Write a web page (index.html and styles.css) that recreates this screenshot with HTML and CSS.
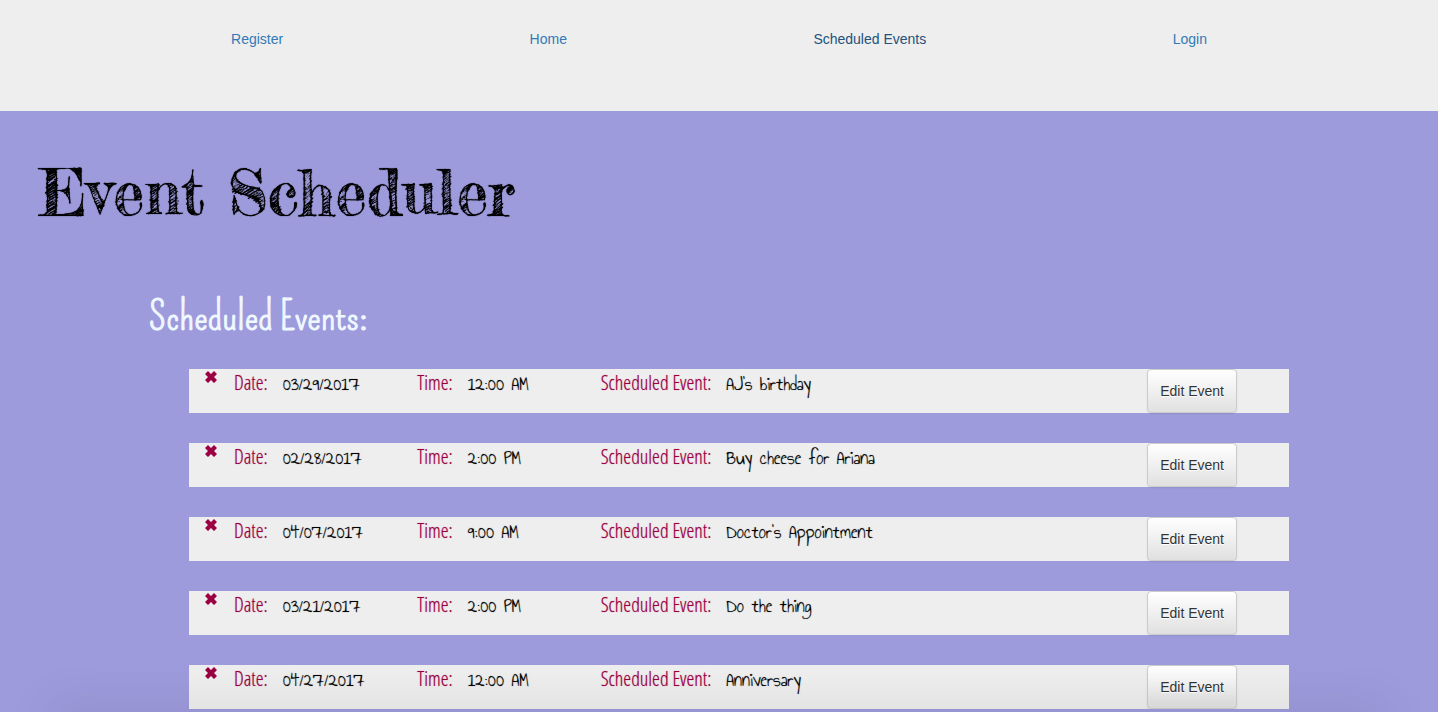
FILE: index.html
```
<!DOCTYPE html>
<html lang="en">
<head>
<meta charset="utf-8">
<title>Event Scheduler</title>
<link rel="stylesheet" href="styles.css">
</head>
<body>
<svg class="sprite" aria-hidden="true"><symbol id="remove" viewBox="0 0 12 12"><path d="M3 0 6 3 9 0 12 3 9 6 12 9 9 12 6 9 3 12 0 9 3 6 0 3Z" stroke-linejoin="round"/></symbol></svg>
<nav class="nav">
  <a href="#">Register</a>
  <a href="#">Home</a>
  <a href="#" class="active">Scheduled Events</a>
  <a href="#">Login</a>
</nav>
<main>
  <h1 class="title">Event Scheduler</h1>
  <section class="container">
    <h2 class="heading">Scheduled Events:</h2>
    <ul class="events">
      <li class="event">
        <button class="remove" aria-label="Remove event"><svg><use href="#remove"/></svg></button>
        <p class="field"><span class="label">Date:</span><span class="value">03/29/2017</span></p>
        <p class="field"><span class="label">Time:</span><span class="value">12:00 AM</span></p>
        <p class="field"><span class="label">Scheduled Event:</span><span class="value">AJ's birthday</span></p>
        <button class="edit">Edit Event</button>
      </li>
      <li class="event">
        <button class="remove" aria-label="Remove event"><svg><use href="#remove"/></svg></button>
        <p class="field"><span class="label">Date:</span><span class="value">02/28/2017</span></p>
        <p class="field"><span class="label">Time:</span><span class="value">2:00 PM</span></p>
        <p class="field"><span class="label">Scheduled Event:</span><span class="value">Buy cheese for Ariana</span></p>
        <button class="edit">Edit Event</button>
      </li>
      <li class="event">
        <button class="remove" aria-label="Remove event"><svg><use href="#remove"/></svg></button>
        <p class="field"><span class="label">Date:</span><span class="value">04/07/2017</span></p>
        <p class="field"><span class="label">Time:</span><span class="value">9:00 AM</span></p>
        <p class="field"><span class="label">Scheduled Event:</span><span class="value">Doctor's Appointment</span></p>
        <button class="edit">Edit Event</button>
      </li>
      <li class="event">
        <button class="remove" aria-label="Remove event"><svg><use href="#remove"/></svg></button>
        <p class="field"><span class="label">Date:</span><span class="value">03/21/2017</span></p>
        <p class="field"><span class="label">Time:</span><span class="value">2:00 PM</span></p>
        <p class="field"><span class="label">Scheduled Event:</span><span class="value">Do the thing</span></p>
        <button class="edit">Edit Event</button>
      </li>
      <li class="event">
        <button class="remove" aria-label="Remove event"><svg><use href="#remove"/></svg></button>
        <p class="field"><span class="label">Date:</span><span class="value">04/27/2017</span></p>
        <p class="field"><span class="label">Time:</span><span class="value">12:00 AM</span></p>
        <p class="field"><span class="label">Scheduled Event:</span><span class="value">Anniversary</span></p>
        <button class="edit">Edit Event</button>
      </li>
    </ul>
  </section>
</main>
<div class="shade"></div>
</body>
</html>
```
FILE: styles.css
```
* { box-sizing: border-box; }
body {
  margin: 0;
  background: #9d9bdc;
  color: #000;
  font: 14px/20px "Helvetica Neue", Helvetica, "Liberation Sans", Arial, sans-serif;
}
.sprite { display: none; }
.nav {
  display: flex;
  justify-content: space-around;
  padding: 29px 7.5% 62px;
  background: #eee;
}
.nav a { color: #337ab7; text-decoration: none; }
.nav .active { color: #23527c; }
.title {
  margin: 41px 0 0 39px;
  font: 63px/80px "Fredericka the Great", "Liberation Serif", serif;
  text-shadow: 0 0 1px #000;
}
.container {
  max-width: 1170px;
  margin: 0 auto;
  padding: 0 15px;
}
.heading {
  margin: 59px 0 0;
  color: #f0f8ff;
  font: 40px/52px "Pompiere", "Liberation Sans Narrow", sans-serif;
  -webkit-text-stroke: 1px #f0f8ff;
}
.events {
  display: grid;
  gap: 30px;
  margin: 26px 0 0;
  padding: 0 0 0 40px;
  list-style: none;
}
.event {
  display: grid;
  grid-template-columns: 30px 17.75% 17.75% 1fr auto;
  align-items: start;
  padding: 0 52px 0 15px;
  background: #eee;
}
.remove {
  width: 14px;
  height: 16px;
  padding: 2px 1px;
  border: 0;
  background: none;
}
.remove svg { display: block; width: 12px; height: 12px; fill: #9b0042; }
.field {
  display: flex;
  align-items: baseline;
  gap: 15px;
  margin: 0;
  font-size: 20px;
  line-height: 28px;
  white-space: nowrap;
}
.label {
  color: #9b0042;
  font-family: "Open Sans Condensed Light", "Open Sans Light Condensed", "Liberation Sans Narrow", "Open Sans Condensed", sans-serif;
  font-weight: 300;
  text-shadow: 0 0 1px rgba(155, 0, 66, .6);
}
.value {
  font-family: "Annie Use Your Telescope", "Liberation Sans", sans-serif;
  text-shadow: 0 0 1px rgba(0, 0, 0, .5);
}
.edit {
  padding: 11px 12px;
  border: 1px solid #ccc;
  border-radius: 4px;
  background: linear-gradient(#fff, #e0e0e0);
  box-shadow: 0 1px 2px rgba(0, 0, 0, .08);
  color: #333;
  font: inherit;
  text-shadow: 0 1px 0 #fff;
}
.shade {
  position: fixed;
  right: 50px;
  bottom: -20px;
  left: 50px;
  height: 20px;
  box-shadow: 0 0 50px rgba(0, 0, 0, .15);
  pointer-events: none;
}
```
